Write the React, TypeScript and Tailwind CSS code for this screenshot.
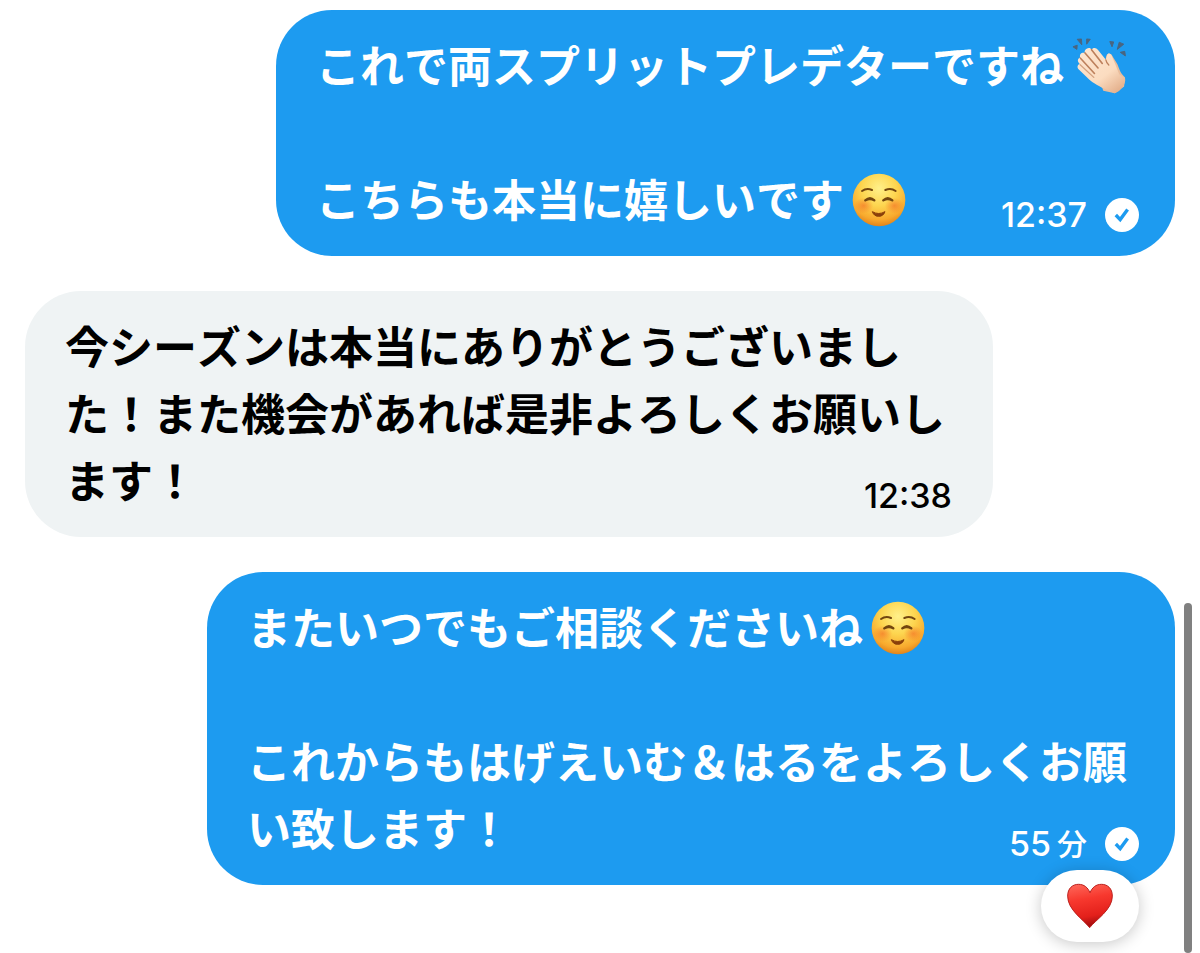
import React from "react";

type Message = {
  id: number;
  mine: boolean;
  body: React.ReactNode;
  time: string;
  unit?: string;
  liked?: boolean;
};

const SmileEmoji: React.FC = () => (
  <svg
    role="img"
    aria-label="☺️"
    viewBox="40 37 168 168"
    className="mr-0.5 ml-2 inline-block size-14 align-[-11px]"
  >
    <defs>
      <radialGradient id="smile-face" cx="0.5" cy="0.28" r="0.74">
        <stop offset="0" stopColor="#fff08a" />
        <stop offset="0.45" stopColor="#fdd54f" />
        <stop offset="0.8" stopColor="#f8a92d" />
        <stop offset="1" stopColor="#dd7d18" />
      </radialGradient>
      <radialGradient id="smile-cheek">
        <stop offset="0" stopColor="#f36a24" stopOpacity="0.6" />
        <stop offset="1" stopColor="#f36a24" stopOpacity="0" />
      </radialGradient>
    </defs>
    <circle cx="121" cy="121" r="79" fill="url(#smile-face)" />
    <ellipse cx="75" cy="138" rx="29" ry="24" fill="url(#smile-cheek)" />
    <ellipse cx="167" cy="138" rx="29" ry="24" fill="url(#smile-cheek)" />
    <g fill="none" stroke="#73460f" strokeLinecap="round">
      <path d="M70 94Q84 84 100 91" strokeWidth="6" />
      <path d="M140 91Q157 84 171 94" strokeWidth="6" />
      <path d="M80 122Q94 109 107 122" strokeWidth="7" />
      <path d="M80 122Q94 117 107 122" strokeWidth="4" />
      <path d="M134 122Q147 109 161 122" strokeWidth="7" />
      <path d="M134 122Q147 117 161 122" strokeWidth="4" />
    </g>
    <path
      d="M101 156Q120 167 139 156Q134 170 120 170Q106 170 101 156Z"
      fill="#8a3f0a"
      stroke="#8a3f0a"
      strokeWidth="3"
      strokeLinejoin="round"
    />
  </svg>
);

const ClapEmoji: React.FC = () => (
  <svg
    role="img"
    aria-label="👏🏻"
    viewBox="39 39 172 172"
    className="mr-0.5 ml-2 inline-block size-14 align-[-11px]"
  >
    <defs>
      <linearGradient id="clap-skin" x1="0" y1="0" x2="0.8" y2="1">
        <stop offset="0" stopColor="#fde6d2" />
        <stop offset="0.65" stopColor="#fbdcc0" />
        <stop offset="1" stopColor="#e4b08c" />
      </linearGradient>
    </defs>
    {/* back hand */}
    <path
      d="M144 96C146 84 158 84 163 94L178 119C183 128 185 146 202 160L199 188L171 209L135 201L128 180Z"
      fill="#e9bd9c"
    />
    {/* front hand */}
    <path
      d="M84 72C90 67 96 70 100 74C105 67 114 69 119 76L143 106L147 91C151 83 159 87 162 96L172 120L184 150L202 163C206 178 189 204 170 209L147 199C126 190 104 178 91 166L60 136C53 129 56 121 63 119C55 111 55 103 64 99C61 88 69 82 78 85C77 79 79 75 84 72Z"
      fill="url(#clap-skin)"
    />
    <g fill="none" stroke="#bd805c" strokeWidth="5" strokeLinecap="round">
      <path d="M99 75L132 117" />
      <path d="M79 85L119 131" />
      <path d="M65 101L108 148" />
      <path d="M64 121L106 160" stroke="#d3a17f" strokeWidth="4" />
      <path d="M143 106Q145 116 152 122" strokeWidth="4" />
    </g>
    <g fill="#4a6580" stroke="#4a6580" strokeWidth="3" strokeLinejoin="round">
      <path d="M42 66L55 61L54 74Z" />
      <path d="M55 43L68 42L69 60Z" />
      <path d="M84 42L95 43L84 58Z" />
      <path d="M155 50L167 51L162 66Z" />
      <path d="M184 52L198 58L178 74Z" />
      <path d="M187 83L201 80L203 94Z" />
    </g>
  </svg>
);

const HeartEmoji: React.FC = () => (
  <svg viewBox="227 223 140 138" className="h-[46px] w-[46px]" aria-hidden="true">
    <defs>
      <linearGradient id="heart-red" x1="0" y1="0" x2="0.2" y2="1">
        <stop offset="0" stopColor="#ff6a5c" />
        <stop offset="0.4" stopColor="#f7382e" />
        <stop offset="0.8" stopColor="#e3201b" />
        <stop offset="1" stopColor="#a80f10" />
      </linearGradient>
    </defs>
    <path
      d="M296 358C278 334 229 304 229 262C229 238 244 226 262 226C279 226 291 236 297 252C303 236 315 226 332 226C350 226 365 238 365 262C365 304 314 334 296 358Z"
      fill="url(#heart-red)"
      stroke="#b9201c"
      strokeWidth="3"
      strokeLinejoin="round"
    />
  </svg>
);

const SentIcon: React.FC = () => (
  <svg viewBox="0 0 34 34" className="size-[34px]" role="img" aria-label="送信済み">
    <circle cx="17" cy="17" r="17" fill="#fff" />
    <path
      d="M10.8 17L15.2 21.6L22.6 11.6"
      fill="none"
      stroke="#1d9bf0"
      strokeWidth="3.4"
    />
  </svg>
);

const messages: Message[] = [
  {
    id: 1,
    mine: true,
    time: "12:37",
    body: (
      <>
        これで両スプリットプレデターですね
        <ClapEmoji />
        <br />
        <br />
        こちらも本当に嬉しいです
        <SmileEmoji />
      </>
    ),
  },
  {
    id: 2,
    mine: false,
    time: "12:38",
    body: "今シーズンは本当にありがとうございました！また機会があれば是非よろしくお願いします！",
  },
  {
    id: 3,
    mine: true,
    time: "55",
    unit: "分",
    liked: true,
    body: (
      <>
        またいつでもご相談くださいね
        <SmileEmoji />
        <br />
        <br />
        これからもはげえいむ＆はるをよろしくお願い致します！
      </>
    ),
  },
];

const MessageBubble: React.FC<{ message: Message }> = ({ message }) => {
  const { mine, body, time, unit, liked } = message;

  return (
    <li
      className={`relative w-fit max-w-[calc(100%-182px)] rounded-[56px] pt-[21px] pr-[45px] pb-6 pl-10 ${
        mine ? "self-end bg-[#1d9bf0] text-white" : "self-start bg-[#eff3f4] text-black"
      }`}
    >
      <div className="flow-root text-[44px] leading-[67px] font-bold [font-kerning:none]">
        {body}
        {/* 時刻は最終行の右端に回り込ませる */}
        <span
          className={`float-right mt-[33px] flex h-[34px] items-center gap-[18px] text-[34px] leading-[34px] font-medium ${
            mine ? "-mr-[9px]" : "-mr-1"
          }`}
        >
          <time className="flex items-center gap-1.5 font-['Inter','Noto_Sans_CJK_JP',sans-serif]">
            {time}
            {unit && <span className="text-[30px]">{unit}</span>}
          </time>
          {mine && <SentIcon />}
        </span>
      </div>

      {liked && (
        <button
          type="button"
          aria-label="いいね"
          className="absolute right-9 -bottom-[57px] flex h-[72px] w-[98px] items-center justify-center rounded-[36px] bg-white shadow-[0_2px_16px_rgba(0,0,0,0.22)]"
        >
          <HeartEmoji />
        </button>
      )}
    </li>
  );
};

const App: React.FC = () => {
  return (
    <main
      lang="ja"
      className="relative min-h-screen bg-white px-[25px] pt-[10px] font-['Noto_Sans_CJK_JP',sans-serif]"
    >
      <ul className="flex flex-col gap-[35px]">
        {messages.map((message) => (
          <MessageBubble key={message.id} message={message} />
        ))}
      </ul>

      {/* スクロールバー */}
      <div className="absolute right-2 bottom-0 h-[350px] w-2 rounded-full bg-[#808080]" />
    </main>
  );
};

export default App;
